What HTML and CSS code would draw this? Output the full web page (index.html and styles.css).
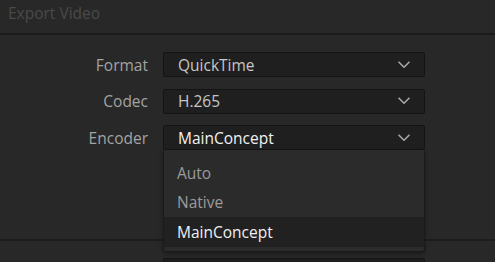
FILE: index.html
```html
<!DOCTYPE html>
<html>
<head>
<meta charset="utf-8">
<link rel="stylesheet" href="styles.css">
</head>
<body>
<div class="window">
  <header class="titlebar"><span class="title">Export Video</span></header>
  <section class="form">
    <div class="row">
      <label class="label">Format</label>
      <div class="select"><span class="value">QuickTime</span><svg class="chev" viewBox="0 0 12 8" width="12" height="8"><path d="M1 1.2 L6 6.2 L11 1.2"/></svg></div>
    </div>
    <div class="row">
      <label class="label">Codec</label>
      <div class="select"><span class="value">H.265</span><svg class="chev" viewBox="0 0 12 8" width="12" height="8"><path d="M1 1.2 L6 6.2 L11 1.2"/></svg></div>
    </div>
    <div class="row">
      <label class="label">Encoder</label>
      <div class="select-wrap">
        <div class="select open"><span class="value bright">MainConcept</span><svg class="chev" viewBox="0 0 12 8" width="12" height="8"><path d="M1 1.2 L6 6.2 L11 1.2"/></svg></div>
        <ul class="menu">
          <li class="item">Auto</li>
          <li class="item">Native</li>
          <li class="item active">MainConcept</li>
        </ul>
      </div>
    </div>
  </section>
  <section class="lower">
    <div class="row">
      <span class="label"></span>
      <div class="select"></div>
    </div>
  </section>
</div>
</body>
</html>
```

FILE: styles.css
```css
* { box-sizing: border-box; }
html, body { margin: 0; padding: 0; background: #282828; }
body {
  width: 495px;
  height: 262px;
  overflow: hidden;
  font-family: "Open Sans", "Noto Sans", sans-serif;
}
.window {
  height: 262px;
  background: #282828;
  border-top-right-radius: 8px;
  overflow: hidden;
}
.titlebar {
  height: 35px;
  border-bottom: 2px solid #1b1b1b;
  padding-left: 8px;
  display: flex;
  align-items: flex-start;
}
.title {
  color: #4a4a4a;
  font-size: 15.5px;
  line-height: 26px;
}
.form {
  padding-top: 17px;
  display: flex;
  flex-direction: column;
  gap: 11.5px;
  height: 206px;
  border-bottom: 2px solid #1d1d1d;
}
.row {
  display: flex;
  align-items: center;
  gap: 15px;
}
.label {
  width: 148px;
  text-align: right;
  color: #a3a3a3;
  font-size: 15.5px;
}
.select-wrap { position: relative; }
.select {
  width: 262px;
  height: 25px;
  background: #1f1f1f;
  border: 1px solid #141414;
  border-radius: 2px;
  display: flex;
  align-items: center;
  justify-content: space-between;
  padding: 0 14px;
}
.value {
  color: #c6c6c6;
  font-size: 15.5px;
  line-height: 22px;
}
.value.bright { color: #f2f2f2; }
.chev { display: block; }
.chev path {
  fill: none;
  stroke: #a6a6a6;
  stroke-width: 1.6;
  stroke-linecap: round;
  stroke-linejoin: round;
}
.menu {
  position: absolute;
  left: 0;
  top: 25px;
  width: 262px;
  margin: 0;
  padding: 9px 0 4px 0;
  list-style: none;
  background: #2b2b2b;
  border: 1px solid #1a1a1a;
  border-top: none;
  border-radius: 0 0 3px 3px;
  box-shadow: 0 2px 4px rgba(0,0,0,0.35);
  z-index: 5;
}
.item {
  height: 29px;
  line-height: 29px;
  padding-left: 13px;
  color: #9b9b9b;
  font-size: 15.5px;
}
.item.active {
  height: 30px;
  line-height: 30px;
  background: #212121;
  color: #f0f0f0;
}
.lower {
  padding-top: 17px;
}
```
